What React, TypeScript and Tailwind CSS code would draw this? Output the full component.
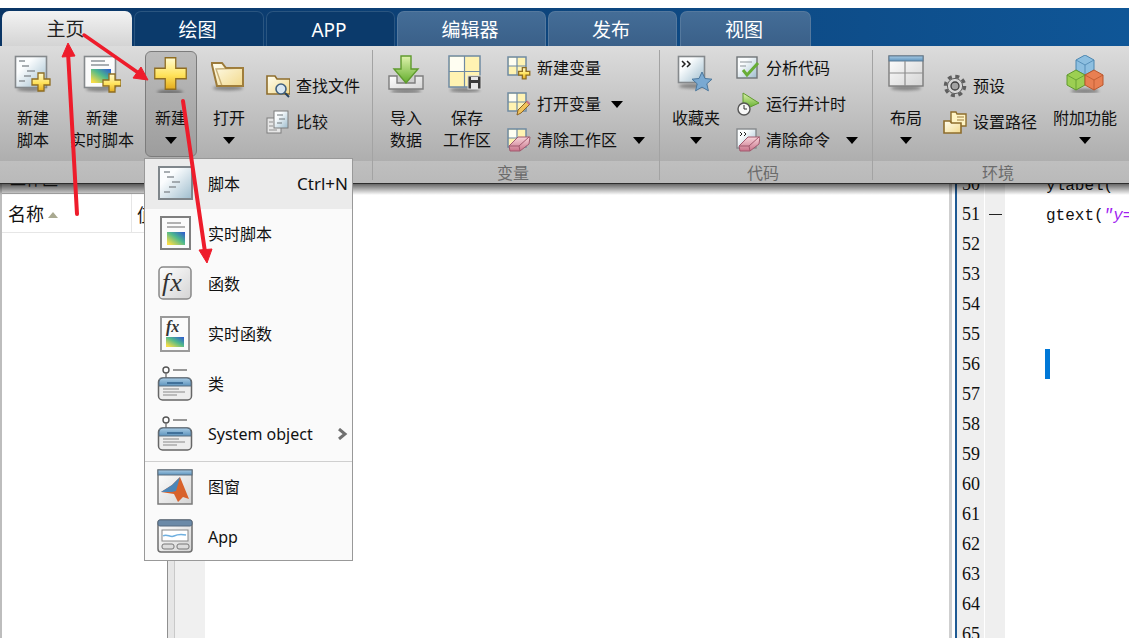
import type { ReactNode } from "react";

const cjk = "font-['Noto_Sans','Noto_Sans_CJK_SC',sans-serif]";

// --- shared svg paints ---
function Paints() {
  return (
    <svg className="absolute w-0 h-0">
      <defs>
        <linearGradient id="doc" x1="0" y1="0" x2="1" y2="1">
          <stop offset="0.3" stopColor="#fbfdfe" />
          <stop offset="1" stopColor="#9dbccd" />
        </linearGradient>
        <linearGradient id="gold" x1="0" y1="0" x2="0" y2="1">
          <stop offset="0" stopColor="#fffbd2" />
          <stop offset="0.55" stopColor="#ffe35c" />
          <stop offset="1" stopColor="#e4ab1e" />
        </linearGradient>
        <linearGradient id="folder" x1="0" y1="0" x2="1" y2="1">
          <stop offset="0" stopColor="#fffef0" />
          <stop offset="1" stopColor="#f2d98c" />
        </linearGradient>
        <linearGradient id="green" x1="0" y1="0" x2="0" y2="1">
          <stop offset="0" stopColor="#dff3ad" />
          <stop offset="1" stopColor="#62ad2c" />
        </linearGradient>
        <linearGradient id="heat" x1="0" y1="1" x2="1" y2="0">
          <stop offset="0.1" stopColor="#f6dc48" />
          <stop offset="0.55" stopColor="#4fb98c" />
          <stop offset="1" stopColor="#2b55d2" />
        </linearGradient>
        <linearGradient id="eraser" x1="0" y1="0" x2="0" y2="1">
          <stop offset="0" stopColor="#f8d5db" />
          <stop offset="1" stopColor="#c9738a" />
        </linearGradient>
        <linearGradient id="silver" x1="0" y1="0" x2="1" y2="1">
          <stop offset="0" stopColor="#ffffff" />
          <stop offset="1" stopColor="#d4d4d4" />
        </linearGradient>
        <linearGradient id="cap" x1="0" y1="0" x2="0" y2="1">
          <stop offset="0" stopColor="#a8cbe4" />
          <stop offset="1" stopColor="#5d93bd" />
        </linearGradient>
        <filter id="soft" x="-30%" y="-100%" width="160%" height="300%">
          <feGaussianBlur stdDeviation="1.6" />
        </filter>
      </defs>
    </svg>
  );
}

function Ico({ s = 38, children }: { s?: number; children: ReactNode }) {
  return (
    <svg width={s} height={s} viewBox={`0 0 ${s} ${s}`} className="shrink-0 block">
      {children}
    </svg>
  );
}

const Glow = ({ cx, cy, rx }: { cx: number; cy: number; rx: number }) => (
  <ellipse cx={cx} cy={cy} rx={rx} ry={2.5} fill="#000" opacity={0.35} filter="url(#soft)" />
);

const Plus = ({ x, y, k = 1 }: { x: number; y: number; k?: number }) => (
  <path
    transform={`translate(${x} ${y}) scale(${k})`}
    d="M7 1h6v6h6v6h-6v6H7v-6H1V7h6z"
    fill="url(#gold)"
    stroke="#8f6d22"
    strokeWidth={1.3 / k}
  />
);

const TextLines = ({ x, y }: { x: number; y: number }) => (
  <path
    transform={`translate(${x} ${y})`}
    d="M0 0h6M3 5h7M8 10h8M5 15h7M0 20h6"
    stroke="#8d9499"
    strokeWidth="1.4"
    fill="none"
  />
);

const NewScriptIcon = () => (
  <Ico>
    <Glow cx={17} cy={34} rx={14} />
    <rect x="1.5" y="1.5" width="31" height="31" fill="url(#doc)" stroke="#85898c" strokeWidth="1.6" />
    <TextLines x={5} y={6} />
    <Plus x={17} y={17} />
  </Ico>
);

const NewLiveIcon = () => (
  <Ico>
    <Glow cx={17} cy={34} rx={14} />
    <rect x="1.5" y="1.5" width="31" height="31" fill="#fbfbfb" stroke="#85898c" strokeWidth="1.6" />
    <path d="M8 6h14M8 10h18" stroke="#8d9499" strokeWidth="1.4" />
    <rect x="8" y="14" width="20" height="14" fill="url(#heat)" />
    <Plus x={19} y={18} />
  </Ico>
);

const BigPlusIcon = () => (
  <Ico>
    <Glow cx={18} cy={37} rx={13} />
    <Plus x={1} y={1} k={1.75} />
  </Ico>
);

const OpenIcon = () => (
  <Ico>
    <Glow cx={18} cy={33} rx={15} />
    <path d="M2 10l0 -2h10l4 5h17v18H7z" fill="url(#folder)" stroke="#9b7a3a" strokeWidth="2" />
    <path d="M33 13v18H12L6 14z" fill="none" stroke="#a7843f" strokeWidth="1.4" opacity="0.6" />
  </Ico>
);

const FindIcon = () => (
  <Ico s={24}>
    <path d="M1 5V2h8l2 3h13v15H1z" fill="url(#folder)" stroke="#8e6d2c" strokeWidth="1.6" />
    <circle cx="15" cy="15" r="5" fill="#d7e6f2" stroke="#3f5f7d" strokeWidth="1.6" />
    <path d="M19 19l4 4" stroke="#24415c" strokeWidth="2" />
  </Ico>
);

const CompareIcon = () => (
  <Ico s={24}>
    <rect x="1" y="8" width="14" height="15" fill="#e6e6e6" stroke="#7e7e7e" />
    <rect x="8" y="1" width="14" height="17" fill="url(#doc)" stroke="#7c7c7c" />
    <path d="M11 5h6M13 9h6M11 13h5" stroke="#6f767b" />
    <path d="M3 12h4M3 16h4M3 20h8" stroke="#8f8f8f" />
  </Ico>
);

const ImportIcon = () => (
  <Ico>
    <Glow cx={19} cy={36} rx={15} />
    <path d="M2 21h8v7h18v-7h8v13H2z" fill="url(#silver)" stroke="#7d7d7d" strokeWidth="1.4" />
    <path d="M14 1h10v13h7L19 28 7 14h7z" fill="url(#green)" stroke="#5f9a2e" strokeWidth="1.4" />
  </Ico>
);

const CellGrid = ({ n }: { n: number }) => (
  <g>
    <rect x="1" y="1" width={n} height={n} fill="#fff3b2" stroke="#6f8aa3" strokeWidth="1.5" />
    <rect x="2" y="2" width={n / 2 - 1} height={n / 2 - 1} fill="#fffef2" />
    <path d={`M${1 + n / 2} 1v${n}M1 ${1 + n / 2}h${n}`} stroke="#6f8aa3" strokeWidth="1.2" />
  </g>
);

const SaveIcon = () => (
  <Ico>
    <Glow cx={17} cy={35} rx={15} />
    <CellGrid n={31} />
    <rect x="20" y="21" width="13" height="13" fill="#3a3a3a" stroke="#d8d8d8" />
    <rect x="23" y="22" width="7" height="3" fill="#e6e6e6" />
    <rect x="23" y="28" width="7" height="6" fill="#e6e6e6" />
  </Ico>
);

const NewVarIcon = () => (
  <Ico s={24}>
    <CellGrid n={18} />
    <Plus x={11} y={11} k={0.62} />
  </Ico>
);

const OpenVarIcon = () => (
  <Ico s={24}>
    <CellGrid n={18} />
    <path d="M10 23l1-5L20 9l3 3-9 9z" fill="#f1c35a" stroke="#8a6326" />
    <path d="M19 10l3 3 1.5-1.5-3-3z" fill="#c9738a" />
  </Ico>
);

const Eraser = ({ x, y }: { x: number; y: number }) => (
  <g transform={`translate(${x} ${y})`}>
    <path d="M1 11L10 2h12l-1 7-9 7H2z" fill="url(#eraser)" stroke="#a15a6e" />
    <path d="M1 11h10l1 5M11 11l10-9" fill="none" stroke="#a15a6e" />
  </g>
);

const ClearVarIcon = () => (
  <Ico s={24}>
    <CellGrid n={18} />
    <Eraser x={1} y={7} />
  </Ico>
);

const FavoriteIcon = () => (
  <Ico>
    <Glow cx={16} cy={31} rx={14} />
    <rect x="1.5" y="1.5" width="26" height="26" fill="url(#doc)" stroke="#85898c" strokeWidth="1.6" />
    <path d="M5 6l3 3-3 3M10 6l3 3-3 3" fill="none" stroke="#222" strokeWidth="1.5" />
    <path
      d="M25 17l3 6.5 7 .7-5.2 4.6 1.6 7-6.4-3.7-6.4 3.7 1.6-7-5.2-4.6 7-.7z"
      fill="#79a9d2"
      stroke="#4b779c"
    />
  </Ico>
);

const AnalyzeIcon = () => (
  <Ico s={24}>
    <rect x="1" y="1" width="20" height="21" fill="url(#doc)" stroke="#6f7477" strokeWidth="1.4" />
    <path d="M4 6h12M4 10h6" stroke="#8d9499" />
    <path d="M7 14l4 5 11-12" fill="none" stroke="#68ad36" strokeWidth="3" />
  </Ico>
);

const TimerIcon = () => (
  <Ico s={24}>
    <path d="M7 1l16 10-11 5H7z" fill="url(#green)" stroke="#5f9a2e" />
    <circle cx="8" cy="17" r="6" fill="#f7f7f7" stroke="#555" strokeWidth="1.4" />
    <path d="M8 13v4h3" fill="none" stroke="#333" />
  </Ico>
);

const ClearCmdIcon = () => (
  <Ico s={24}>
    <rect x="1" y="1" width="19" height="19" fill="url(#doc)" stroke="#85898c" strokeWidth="1.4" />
    <path d="M4 4l2 2-2 2M8 4l2 2-2 2" fill="none" stroke="#222" />
    <Eraser x={2} y={7} />
  </Ico>
);

const LayoutIcon = () => (
  <Ico>
    <Glow cx={19} cy={33} rx={15} />
    <rect x="2" y="1" width="34" height="30" fill="url(#silver)" stroke="#7d7d7d" strokeWidth="1.4" />
    <rect x="2" y="1" width="34" height="5" fill="url(#cap)" stroke="#5f7c95" />
    <path d="M18 6v25M2 18h34" stroke="#8d8d8d" strokeWidth="1.2" />
  </Ico>
);

const GearIcon = () => (
  <Ico s={24}>
    <circle cx="12" cy="12" r="9.6" fill="none" stroke="#5f5f5f" strokeWidth="3.4" strokeDasharray="4 3.54" />
    <circle cx="12" cy="12" r="7.6" fill="#d6d6d6" stroke="#5f5f5f" />
    <circle cx="12" cy="12" r="4" fill="#a2a2a2" stroke="#3d3d3d" strokeWidth="1.3" />
  </Ico>
);

const PathIcon = () => (
  <Ico s={24}>
    <path d="M8 6V2h5l1 2h9v12H8z" fill="#fff4c4" stroke="#8e6d2c" strokeWidth="1.4" />
    <path d="M1 11h6l1.5 2H18v10H1z" fill="url(#folder)" stroke="#8e6d2c" strokeWidth="1.6" />
    <path d="M14 7h7M14 10h7" stroke="#9b7a3a" />
  </Ico>
);

const Hex = ({ x, y, a, b }: { x: number; y: number; a: string; b: string }) => (
  <g transform={`translate(${x} ${y})`}>
    <path d="M9 0l9 5v10l-9 5-9-5V5z" fill={a} stroke={b} />
    <path d="M0 5l9 5 9-5M9 10v10" fill="none" stroke={b} opacity="0.8" />
  </g>
);

const AddonIcon = () => (
  <Ico>
    <Glow cx={19} cy={36} rx={14} />
    <Hex x={10} y={0} a="#8dbfe0" b="#4b86b0" />
    <Hex x={1} y={15} a="#9ccf52" b="#5f9a2e" />
    <Hex x={19} y={15} a="#e87f52" b="#b9572d" />
  </Ico>
);

// --- menu icons ---
const MenuScript = () => (
  <Ico s={36}>
    <rect x="2" y="1" width="33" height="32" fill="url(#doc)" stroke="#7f868b" strokeWidth="2" />
    <TextLines x={7} y={6} />
  </Ico>
);

const MenuLive = () => (
  <Ico s={36}>
    <rect x="4" y="1" width="29" height="32" fill="#fbfbfb" stroke="#7f7f7f" strokeWidth="2" />
    <path d="M10 7h14M10 11h18" stroke="#9a9a9a" strokeWidth="1.4" />
    <rect x="10" y="16" width="18" height="13" fill="url(#heat)" />
  </Ico>
);

const MenuFx = () => (
  <Ico s={36}>
    <rect x="2" y="1" width="32" height="32" rx="4" fill="url(#silver)" stroke="#888" strokeWidth="1.5" />
    <text x="5" y="25" fontFamily="Liberation Serif" fontStyle="italic" fontSize="26" letterSpacing="1" fill="#333">
      fx
    </text>
  </Ico>
);

const MenuLiveFx = () => (
  <Ico s={36}>
    <rect x="4" y="1" width="28" height="34" fill="#fbfbfb" stroke="#9a9a9a" strokeWidth="2" />
    <text x="9" y="16" fontFamily="Liberation Serif" fontStyle="italic" fontWeight="700" fontSize="16" fill="#333">
      fx
    </text>
    <rect x="9" y="21" width="18" height="10" fill="url(#heat)" />
  </Ico>
);

const MenuClass = () => (
  <Ico s={36}>
    <circle cx="9" cy="4" r="3" fill="#fff" stroke="#555" strokeWidth="1.4" />
    <path d="M9 7v6M16 4h14" stroke="#777" strokeWidth="1.4" />
    <rect x="1.5" y="12" width="33" height="22" rx="4" fill="#ededed" stroke="#666" strokeWidth="1.5" />
    <path d="M2 20v-4a4 4 0 0 1 4-4h24a4 4 0 0 1 4 4v4z" fill="url(#cap)" stroke="#5b6f80" />
    <path d="M10 17h16" stroke="#2f5f8a" strokeWidth="1.5" />
    <path d="M6 23h16M6 26h22M6 29h14" stroke="#8a8a8a" strokeWidth="1.2" />
  </Ico>
);

const MenuFigure = () => (
  <Ico s={36}>
    <rect x="1" y="1" width="34" height="34" fill="url(#silver)" stroke="#7a7a7a" strokeWidth="1.5" />
    <rect x="1" y="1" width="34" height="5" fill="url(#cap)" stroke="#5b6f80" />
    <path d="M4 23l11-7 8-8 9 22-6-2-5 5-4-8z" fill="#d8622b" />
    <path d="M4 23l11-7 8-8-4 14-4 1z" fill="#4b86b8" />
  </Ico>
);

const MenuApp = () => (
  <Ico s={36}>
    <rect x="1" y="1" width="34" height="32" rx="3" fill="url(#silver)" stroke="#6f6f6f" strokeWidth="1.5" />
    <rect x="1" y="1" width="34" height="6" rx="2" fill="#6b8aa8" stroke="#566b80" />
    <rect x="5" y="11" width="26" height="11" fill="#fff" stroke="#888" />
    <path d="M6 17c4-3 7 2 11 0s7-2 12-1" fill="none" stroke="#6fb0e0" strokeWidth="1.5" />
    <rect x="5" y="25" width="12" height="5" rx="2" fill="#ddd" stroke="#777" />
    <rect x="20" y="25" width="12" height="5" rx="2" fill="#ddd" stroke="#777" />
  </Ico>
);

// --- ribbon pieces ---
const Caret = () => (
  <span className="inline-block w-0 h-0 border-x-[6px] border-t-[7px] border-x-transparent border-t-black" />
);

function BigBtn({
  icon,
  lines,
  caret,
  active,
  className,
}: {
  icon: ReactNode;
  lines: string[];
  caret?: boolean;
  active?: boolean;
  className: string;
}) {
  return (
    <div
      className={`h-[106px] flex flex-col items-center shrink-0 rounded-[6px] border pt-[3px] mt-[5px] ${
        active
          ? "bg-gradient-to-b from-[#bcbcbc] to-[#9d9d9d] border-[#7c7c7c]"
          : "border-transparent"
      } ${className}`}
    >
      <div className="h-[40px] flex justify-center">{icon}</div>
      <div className="mt-[12px] text-center whitespace-nowrap">
        {lines.map((l) => (
          <div key={l} className="h-[22px] leading-[22px]">
            {l}
          </div>
        ))}
        {caret && (
          <div className="h-[22px] flex items-center justify-center">
            <Caret />
          </div>
        )}
      </div>
    </div>
  );
}

function SmallBtn({ icon, label, caretGap }: { icon: ReactNode; label: string; caretGap?: string }) {
  return (
    <div className="h-[36px] flex items-center gap-[6px] whitespace-nowrap">
      {icon}
      <span>{label}</span>
      {caretGap && (
        <span className={`flex ${caretGap}`}>
          <Caret />
        </span>
      )}
    </div>
  );
}

function Section({ w, label, children }: { w: string; label: string; children: ReactNode }) {
  return (
    <div className={`flex flex-col shrink-0 ${w}`}>
      <div className="flex h-[116px]">{children}</div>
      <div className="h-[21px] leading-[23px] text-center pr-[6px] text-[#6b6b6b]">{label}</div>
    </div>
  );
}

const Divider = () => <div className="w-px shrink-0 mt-[4px] mb-[3px] bg-[#a3a3a3]" />;

function Tab({ w, label, kind }: { w: string; label: string; kind: "on" | "dark" | "light" }) {
  const look = {
    on: "bg-gradient-to-b from-[#f3f3f3] to-[#d4d4d4] text-[#222]",
    dark: "bg-[#0b3a6b] text-white border border-b-0 border-[#2a5580]",
    light: "bg-gradient-to-b from-[#446d97] to-[#3a6089] text-white border border-b-0 border-[#55799e]",
  }[kind];
  return (
    <div className={`h-[35px] rounded-t-[7px] pr-[3px] text-[19px] leading-[37px] text-center shrink-0 ${w} ${look}`}>
      {label}
    </div>
  );
}

function MenuItem({
  icon,
  label,
  right,
  cls = "h-[50px]",
}: {
  icon: ReactNode;
  label: string;
  right?: ReactNode;
  cls?: string;
}) {
  return (
    <div className={`flex items-center pl-[12px] pr-[4px] ${cls}`}>
      {icon}
      <span className="ml-[15px] flex-1 whitespace-nowrap">{label}</span>
      {right}
    </div>
  );
}

const lines = [50, 51, 52, 53, 54, 55, 56, 57, 58, 59, 60, 61, 62, 63, 64, 65];

export default function App() {
  return (
    <div className={`relative w-full h-screen overflow-hidden bg-white flex flex-col text-[16px] text-[#111] ${cjk}`}>
      <Paints />
      <div className="h-[8px] shrink-0 bg-white" />

      {/* Tabs */}
      <div className="h-[38px] shrink-0 pt-[3px] pl-[2px] flex gap-[2px] bg-gradient-to-r from-[#0a3565] to-[#0f5697]">
        <Tab w="w-[130px]" label="主页" kind="on" />
        <Tab w="w-[130px]" label="绘图" kind="dark" />
        <Tab w="w-[129px]" label="APP" kind="dark" />
        <Tab w="w-[149px]" label="编辑器" kind="light" />
        <Tab w="w-[129px]" label="发布" kind="light" />
        <Tab w="w-[131px] ml-[1px]" label="视图" kind="light" />
      </div>

      {/* Ribbon */}
      <div className="relative z-10 h-[138px] shrink-0 flex border-b border-[#777] bg-[linear-gradient(#dcdcdc_0,#aeaeae_84%,#bfbfbf_84%,#b9b9b9_100%)]">
        <Section w="w-[372px]" label="文件">
          <BigBtn className="w-[66px]" icon={<NewScriptIcon />} lines={["新建", "脚本"]} />
          <BigBtn className="w-[72px]" icon={<NewLiveIcon />} lines={["新建", "实时脚本"]} />
          <BigBtn className="w-[52px] ml-[7px]" icon={<BigPlusIcon />} lines={["新建"]} caret active />
          <BigBtn className="w-[52px] ml-[6px]" icon={<OpenIcon />} lines={["打开"]} caret />
          <div className="ml-[11px] pt-[22px]">
            <SmallBtn icon={<FindIcon />} label="查找文件" />
            <SmallBtn icon={<CompareIcon />} label="比较" />
          </div>
        </Section>
        <Divider />
        <Section w="w-[286px]" label="变量">
          <BigBtn className="w-[46px] ml-[10px]" icon={<ImportIcon />} lines={["导入", "数据"]} />
          <BigBtn className="w-[56px] ml-[10px]" icon={<SaveIcon />} lines={["保存", "工作区"]} />
          <div className="ml-[12px] pt-[4px]">
            <SmallBtn icon={<NewVarIcon />} label="新建变量" />
            <SmallBtn icon={<OpenVarIcon />} label="打开变量" caretGap="ml-[4px]" />
            <SmallBtn icon={<ClearVarIcon />} label="清除工作区" caretGap="ml-[10px]" />
          </div>
        </Section>
        <Divider />
        <Section w="w-[212px]" label="代码">
          <BigBtn className="w-[48px] ml-[12px]" icon={<FavoriteIcon />} lines={["收藏夹"]} caret />
          <div className="ml-[16px] pt-[4px]">
            <SmallBtn icon={<AnalyzeIcon />} label="分析代码" />
            <SmallBtn icon={<TimerIcon />} label="运行并计时" />
            <SmallBtn icon={<ClearCmdIcon />} label="清除命令" caretGap="ml-[10px]" />
          </div>
        </Section>
        <Divider />
        <Section w="w-[256px]" label="环境">
          <BigBtn className="w-[42px] ml-[12px]" icon={<LayoutIcon />} lines={["布局"]} caret />
          <div className="ml-[16px] pt-[22px]">
            <SmallBtn icon={<GearIcon />} label="预设" />
            <SmallBtn icon={<PathIcon />} label="设置路径" />
          </div>
          <BigBtn className="w-[68px] ml-[14px]" icon={<AddonIcon />} lines={["附加功能"]} caret />
        </Section>
        <div className="absolute top-full left-0 right-0 h-[12px] bg-gradient-to-b from-black/65 to-transparent" />
      </div>

      {/* Body */}
      <div className="flex-1 min-h-0 flex">
        {/* Workspace */}
        <div className="w-[167px] shrink-0 flex flex-col border-l-2 border-[#bdbdbd]">
          <div className="h-[9px] overflow-hidden bg-[#dcdcdc]">
            <div className="-mt-[16px] ml-[8px] text-[#222] leading-[22px]">工作区</div>
          </div>
          <div className="h-[40px] flex border-t border-b border-t-[#aaa] border-b-[#e6e6e6] text-[18px] bg-white">
            <div className="w-[130px] flex items-center pl-[6px] pt-[3px] gap-[4px] border-r border-[#e6e6e6]">
              名称
              <span className="w-0 h-0 border-x-[5px] border-b-[6px] border-x-transparent border-b-[#a9a990]" />
            </div>
            <div className="pl-[5px] leading-[42px]">值</div>
          </div>
        </div>

        {/* Editor margin of the middle panel */}
        <div className="w-[7px] shrink-0 bg-[#e6e6e6] border-l border-[#8f8f8f]" />
        <div className="w-[31px] shrink-0 bg-[#f0f0f0] border-l border-[#c9c9c9]" />
        <div className="flex-1 bg-white" />

        {/* Right editor */}
        <div className="w-[180px] shrink-0 overflow-hidden flex border-l-[3px] border-[#cfcfcf]">
          <div className="w-[3px] shrink-0 bg-white" />
          <div className="w-[2px] shrink-0 bg-[#1f5a93]" />
          <div className="flex-1 -mt-[15px]">
            {lines.map((n) => (
              <div key={n} className="h-[30px] flex items-stretch">
                <div className="w-[27px] shrink-0 bg-[#efefef] pl-[5px] font-['Liberation_Serif',serif] text-[18px] leading-[30px]">
                  {n}
                </div>
                <div className="w-[20px] shrink-0 ml-px bg-[#efefef] flex items-center justify-center">
                  {n === 51 && <div className="w-[13px] h-px bg-[#222]" />}
                </div>
                <div className="flex-1 min-w-0 pl-[41px] whitespace-nowrap overflow-hidden font-['Liberation_Mono',monospace] text-[16px] leading-[34px]">
                  {n === 50 && "ylabel("}
                  {n === 51 && (
                    <>
                      gtext(<span className="italic text-[#a020f0]">"y=</span>
                    </>
                  )}
                  {n === 56 && <div className="-ml-px w-[5px] h-[30px] bg-[#0078d7]" />}
                </div>
              </div>
            ))}
          </div>
        </div>
      </div>

      {/* Dropdown menu */}
      <div className="absolute z-20 left-[144px] top-[158px] w-[209px] h-[403px] bg-[#fafafa] border border-[#999]">
        <MenuItem
          cls="h-[50px] bg-[#ebebeb]"
          icon={<MenuScript />}
          label="脚本"
          right={<span className="whitespace-nowrap text-[17px]">Ctrl+N</span>}
        />
        <MenuItem icon={<MenuLive />} label="实时脚本" />
        <MenuItem icon={<MenuFx />} label="函数" />
        <MenuItem icon={<MenuLiveFx />} label="实时函数" />
        <MenuItem icon={<MenuClass />} label="类" />
        <MenuItem
          icon={<MenuClass />}
          label="System object"
          right={
            <svg width="11" height="12" viewBox="0 0 11 12">
              <path d="M2 1l6 5-6 5" fill="none" stroke="#707070" strokeWidth="3" />
            </svg>
          }
        />
        <div className="h-px mt-[2px] bg-[#cfcfcf]" />
        <MenuItem icon={<MenuFigure />} label="图窗" />
        <MenuItem cls="h-[50px]" icon={<MenuApp />} label="App" />
      </div>

      {/* Red annotation arrows */}
      <svg className="absolute inset-0 z-30 pointer-events-none" width="1129" height="638" viewBox="0 0 1129 638">
        <g fill="#ee1c2b" stroke="#ee1c2b">
          <path d="M77 214L68 52" strokeWidth="4" strokeLinecap="round" fill="none" />
          <path d="M68 43L62 57L75 56Z" strokeWidth="1" />
          <path d="M84 35L140 74" strokeWidth="3.4" strokeLinecap="round" fill="none" />
          <path d="M148 80L133 78L141 67Z" strokeWidth="1" />
          <path d="M183 101L205 252" strokeWidth="4" strokeLinecap="round" fill="none" />
          <path d="M207 263L199 250L212 249Z" strokeWidth="1" />
        </g>
      </svg>
    </div>
  );
}
